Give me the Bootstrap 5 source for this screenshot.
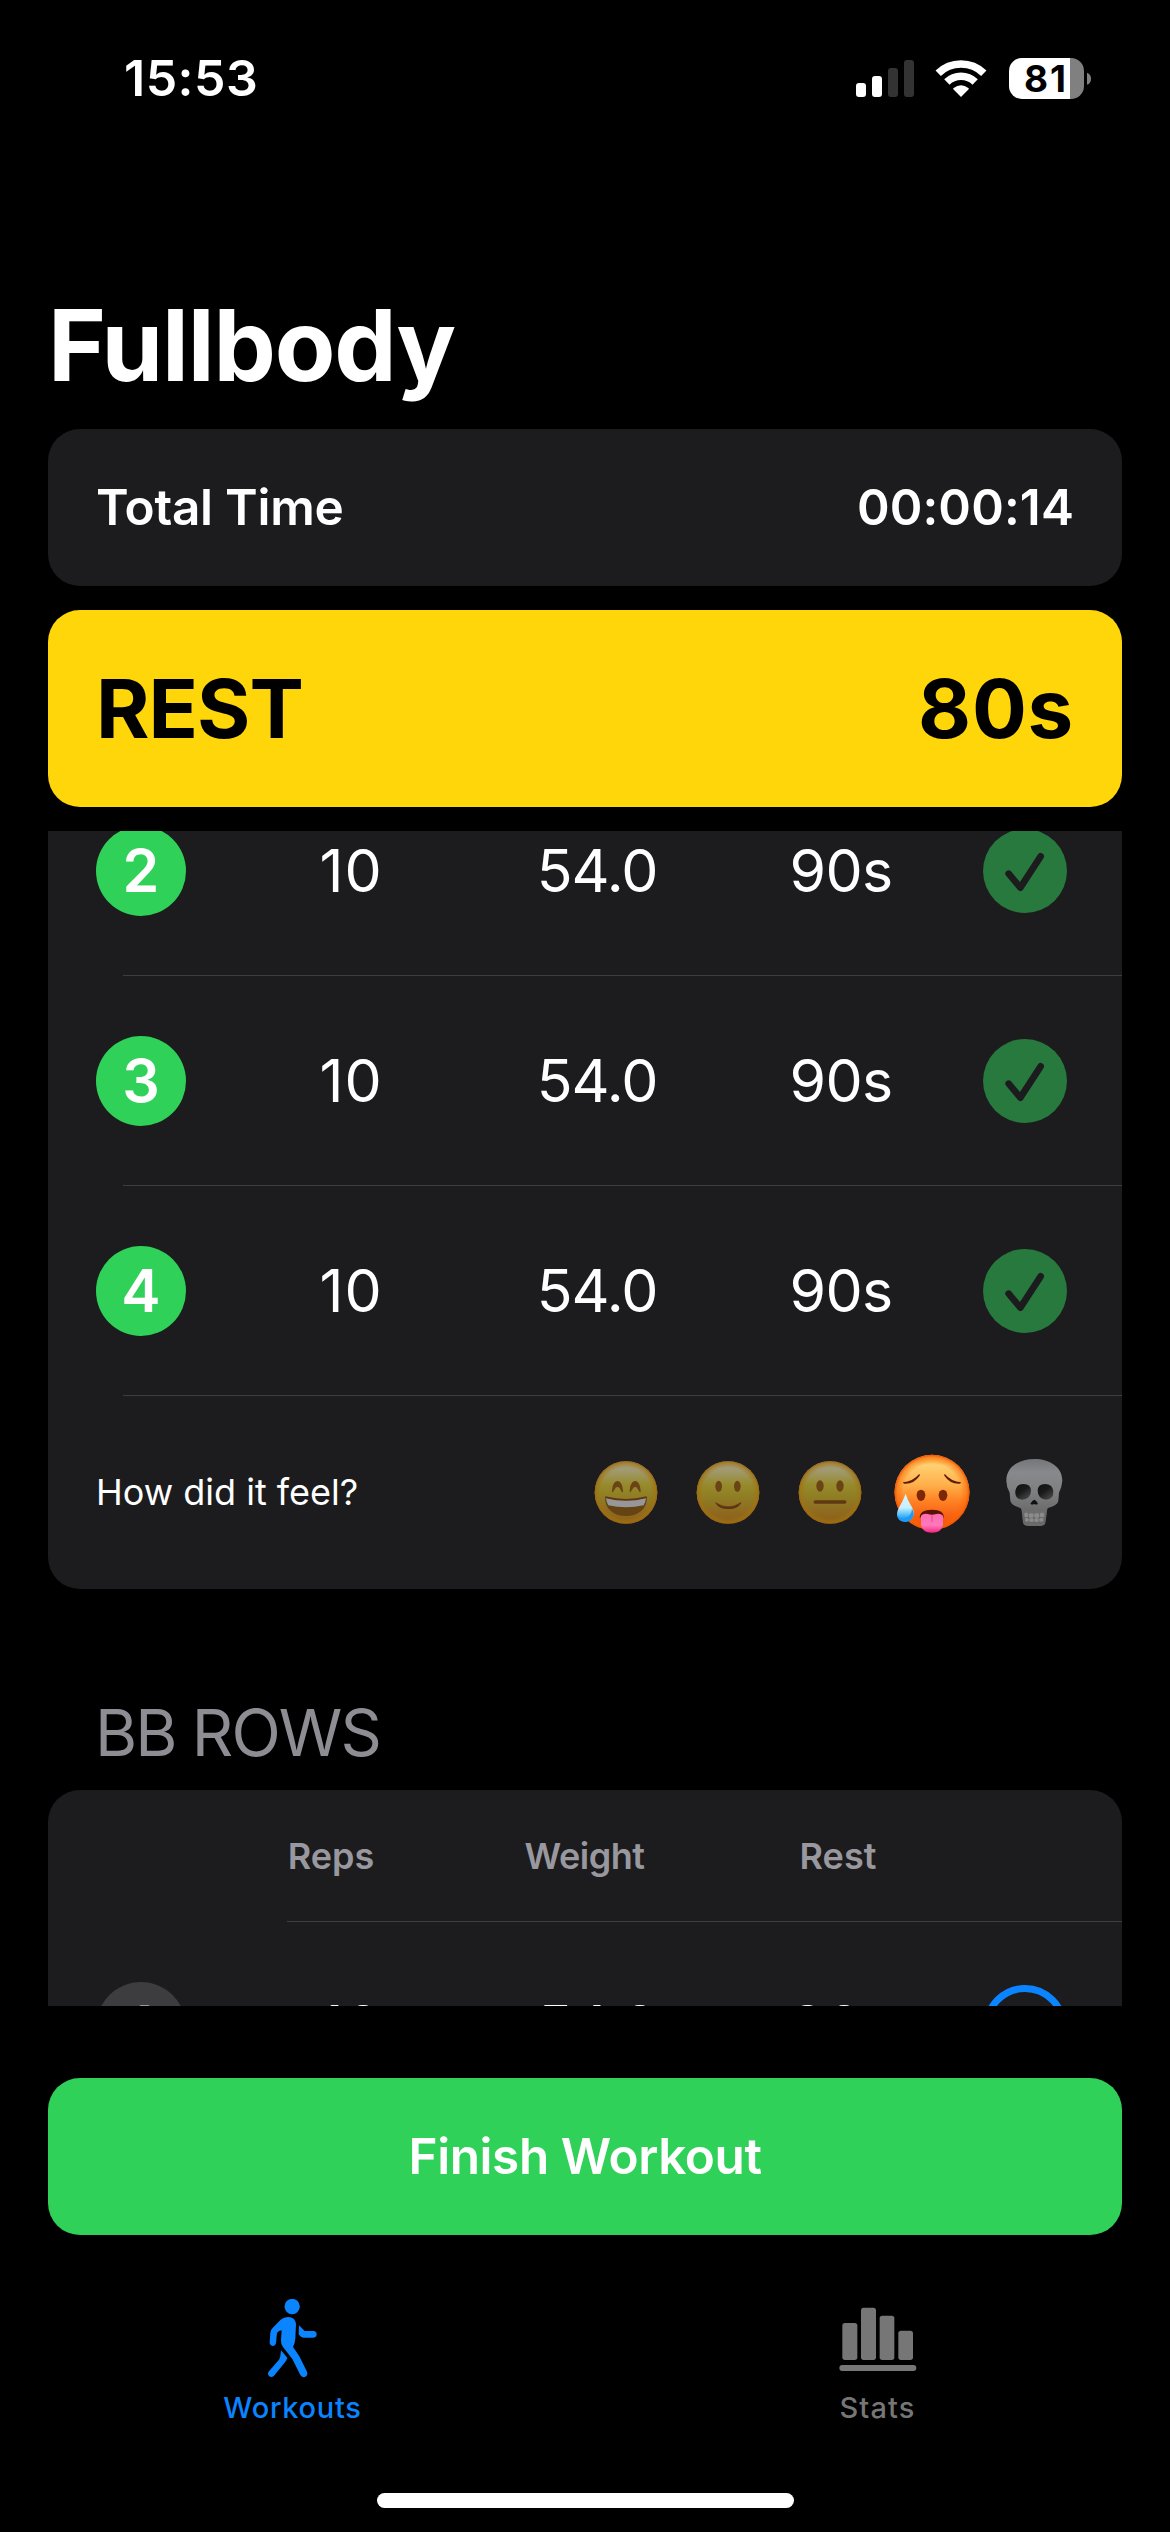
<!DOCTYPE html>
<html lang="en" data-bs-theme="dark">
<head>
<meta charset="utf-8">
<meta name="viewport" content="width=device-width, initial-scale=1">
<title>Fullbody</title>
<link href="https://cdn.jsdelivr.net/npm/bootstrap@5.3.0/dist/css/bootstrap.min.css" rel="stylesheet">
<style>
  body { width: 1170px; height: 2532px; background: #000; color: #fff; font-family: Inter, "Liberation Sans", sans-serif; overflow: hidden; line-height: 1.2; }
  svg { display: block; flex: none; }
  .status { height: 156px; padding: 0 78px 0 124px; }
  .clock { font-size: 50px; font-weight: 600; letter-spacing: .5px; }
  .wifi { margin: 0 22px 0 21px; }
  .battery { width: 75px; height: 41px; border-radius: 13px; background: linear-gradient(90deg, #fff 61px, #808080 61px); color: #000; font-size: 37px; font-weight: 700; letter-spacing: 2px; line-height: 41px; padding-left: 15px; }
  .screen { padding: 0 48px; }
  .title { margin: 129px 0 24px; font-size: 99px; font-weight: 700; letter-spacing: -1.15px; line-height: 120px; }
  .panel { background: #1c1c1e; border: 0; border-radius: 32px; }
  .bar { padding: 0 48px; margin-bottom: 24px; }
  .total { height: 157px; font-size: 49.5px; font-weight: 600; letter-spacing: -.25px; }
  .total .elapsed { letter-spacing: .13px; }
  .rest { height: 197px; background: #ffd60a; color: #000; font-size: 81.5px; font-weight: 700; letter-spacing: -.96px; }
  .rest .left { letter-spacing: .75px; }
  .scroller { height: 1175px; margin-bottom: 72px; overflow: hidden; }
  .sets { margin-top: -65px; border-radius: 0 0 32px 32px; }
  .set { height: 210px; padding-left: 48px; font-size: 59px; }
  .num { width: 90px; height: 90px; margin-right: 42px; background: #30d158; font-weight: 600; }
  .num.idle { background: #3d3d3f; color: #98989d; }
  .reps { width: 246px; letter-spacing: 1px; }
  .weight { width: 246px; letter-spacing: -1px; }
  .pause { width: 242px; letter-spacing: -.6px; margin-right: 21px; }
  .divider { height: 1px; margin: -1px 0 0 75px; border: 0; background: #3d3d41; opacity: 1; }
  .divider.wide { margin-left: 239px; }
  .feel { height: 193px; padding: 0 37px 0 48px; font-size: 36px; }
  .group-name { margin: 104px 0 17px 47px; font-size: 64.5px; font-weight: 400; letter-spacing: -1.9px; line-height: 80px; color: #8d8d93; }
  .heads { height: 132px; padding: 2px 0 0 160px; font-size: 36px; font-weight: 600; color: #98989e; }
  .heads .h-reps { width: 246px; }
  .heads .h-weight { width: 261px; letter-spacing: -.5px; }
  .heads .h-rest { width: 246px; }
  .finish { height: 157px; border: 0; border-radius: 32px; background: #30d158; color: #fff; font-size: 49.5px; font-weight: 600; letter-spacing: -.41px; }
  .tabs { padding-top: 64px; height: 258px; }
  .tabs .nav-link { padding: 0; color: #767676; font-size: 29px; font-weight: 500; letter-spacing: 1.15px; line-height: 35px; gap: 11px; }
  .tabs .nav-link.active { color: #0a84ff; letter-spacing: .72px; }
  .home-bar { width: 417px; height: 15px; border-radius: 8px; background: #fff; }
</style>
</head>
<body class="d-flex flex-column">

<svg width="0" height="0" class="position-absolute">
  <defs>
    <linearGradient id="dimFace" x1="0" y1="0" x2="0" y2="1">
      <stop offset="0" stop-color="#a39a70"/><stop offset=".14" stop-color="#a19a72"/><stop offset=".38" stop-color="#968a2b"/><stop offset=".55" stop-color="#907f25"/><stop offset=".8" stop-color="#8e6b20"/><stop offset="1" stop-color="#8c5d18"/>
    </linearGradient>
    <radialGradient id="dimRim"><stop offset=".8" stop-color="#a0700f" stop-opacity="0"/><stop offset=".94" stop-color="#a2720f" stop-opacity=".6"/><stop offset="1" stop-color="#9a6510"/></radialGradient>
    <linearGradient id="hotFace" x1="0" y1="0" x2="0" y2="1">
      <stop offset="0" stop-color="#ffb03c"/><stop offset=".14" stop-color="#ffcf70"/><stop offset=".4" stop-color="#ffb04a"/><stop offset=".62" stop-color="#ff8124"/><stop offset="1" stop-color="#f24203"/>
    </linearGradient>
    <radialGradient id="hotRim"><stop offset=".76" stop-color="#f86a08" stop-opacity="0"/><stop offset=".93" stop-color="#f96a08" stop-opacity=".6"/><stop offset="1" stop-color="#ef5003"/></radialGradient>
    <linearGradient id="sweat" x1="0" y1="0" x2="0" y2="1"><stop offset="0" stop-color="#d9f6ff"/><stop offset=".5" stop-color="#c5f0fd"/><stop offset=".85" stop-color="#27a8f7"/><stop offset="1" stop-color="#1c8df0"/></linearGradient>
    <linearGradient id="tongue" x1="0" y1="0" x2="0" y2="1"><stop offset="0" stop-color="#ff6cae"/><stop offset=".6" stop-color="#ff78bd"/><stop offset="1" stop-color="#f5277c"/></linearGradient>
    <linearGradient id="bone" x1="0" y1="0" x2="0" y2="1"><stop offset="0" stop-color="#747678"/><stop offset=".2" stop-color="#88898c"/><stop offset=".5" stop-color="#7e7f80"/><stop offset=".75" stop-color="#6d6d6e"/><stop offset="1" stop-color="#6a6a6b"/></linearGradient>
    <linearGradient id="socket" x1="0" y1="0" x2=".7" y2="1"><stop offset="0" stop-color="#111"/><stop offset=".5" stop-color="#1a1a1b"/><stop offset="1" stop-color="#464647"/></linearGradient>
    <symbol id="base" viewBox="0 0 306 375"><circle cx="153" cy="187.5" r="94" fill="url(#dimFace)"/><circle cx="153" cy="187.5" r="94" fill="url(#dimRim)"/></symbol>
    <symbol id="done" viewBox="0 0 252 252">
      <circle cx="126" cy="126" r="126" fill="#27793d"/>
      <path d="M77 134L112 176L173 82" fill="none" stroke="#1c1c1e" stroke-width="20" stroke-linecap="round" stroke-linejoin="round"/>
    </symbol>
  </defs>
</svg>

<header class="status d-flex align-items-center justify-content-between">
  <span class="clock">15:53</span>
  <div class="d-flex align-items-center">
    <svg width="58" height="41" viewBox="78 51 174 123">
      <g fill="#fff"><rect x="78" y="126" width="30" height="42" rx="9"/><rect x="126" y="105" width="30" height="63" rx="9"/></g>
      <g fill="#333"><rect x="174" y="81" width="30" height="87" rx="9"/><rect x="222" y="57" width="30" height="111" rx="9"/></g>
    </svg>
    <svg class="wifi" width="52" height="41" viewBox="316 51 156 123">
      <g fill="none" stroke="#fff" stroke-width="23">
        <path d="M325.600 96.500A98.500 98.500 0 0 1 462.400 96.500"/>
        <path d="M351.600 123A61 61 0 0 1 436.400 123"/>
      </g>
      <path d="M394 168L371 145Q369 143 372 141Q394 125 416 141Q419 143 417 145Z" fill="#fff"/>
    </svg>
    <div class="battery">81</div>
    <svg width="8" height="41" viewBox="762 51 24 123"><path d="M771 95Q783 99 783 113Q783 127 771 131Z" fill="#808080"/></svg>
  </div>
</header>

<main class="screen d-flex flex-column">
  <h1 class="title">Fullbody</h1>

  <div class="panel bar total d-flex align-items-center justify-content-between"><span>Total Time</span><span class="elapsed">00:00:14</span></div>
  <div class="panel bar rest d-flex align-items-center justify-content-between"><span>REST</span><span class="left">80s</span></div>

  <div class="scroller">
    <section class="panel sets">
      <div class="set d-flex align-items-center text-center">
        <span class="num rounded-circle d-flex align-items-center justify-content-center">2</span>
        <span class="reps">10</span><span class="weight">54.0</span><span class="pause">90s</span>
        <svg width="84" height="84"><use href="#done"/></svg>
      </div>
      <hr class="divider">
      <div class="set d-flex align-items-center text-center">
        <span class="num rounded-circle d-flex align-items-center justify-content-center">3</span>
        <span class="reps">10</span><span class="weight">54.0</span><span class="pause">90s</span>
        <svg width="84" height="84"><use href="#done"/></svg>
      </div>
      <hr class="divider">
      <div class="set d-flex align-items-center text-center">
        <span class="num rounded-circle d-flex align-items-center justify-content-center">4</span>
        <span class="reps">10</span><span class="weight">54.0</span><span class="pause">90s</span>
        <svg width="84" height="84"><use href="#done"/></svg>
      </div>
      <hr class="divider">
      <div class="feel d-flex align-items-center justify-content-between">
        <span>How did it feel?</span>
        <div class="d-flex">
          <svg width="102" height="125" viewBox="0 0 306 375">
            <use href="#base"/>
            <path id="arch" d="M111 186C111 142 144 142 144 186C138 190 137 171 127.500 171C118 171 117 190 111 186Z" fill="#6a4415"/>
            <use href="#arch" x="53"/>
            <path d="M90 201Q153 217 216 201C216 236 192 258 153 258C114 258 90 236 90 201Z" fill="#664313"/>
            <path d="M93 205Q153 220 213 205Q212 216 206 226Q153 238 100 226Q94 216 93 205Z" fill="#96969b"/>
            <path d="M91 201Q153 217 215 201" fill="none" stroke="#623612" stroke-width="4"/>
          </svg>
          <svg width="102" height="125" viewBox="0 0 306 375">
            <use href="#base"/>
            <g fill="#6a4415"><ellipse cx="125" cy="169" rx="10" ry="16.500"/><ellipse cx="181" cy="169" rx="10" ry="16.500"/></g>
            <path d="M116 218Q153 243 192 218Q184 236 154 236Q124 236 116 218Z" fill="#5c3212" stroke="#5c3212" stroke-width="2" stroke-linejoin="round"/>
          </svg>
          <svg width="102" height="125" viewBox="0 0 306 375">
            <use href="#base"/>
            <g fill="#6a4415"><ellipse cx="123" cy="168" rx="11" ry="17"/><ellipse cx="183" cy="168" rx="11" ry="17"/></g>
            <path d="M109 216H197" stroke="#5f3913" stroke-width="11" stroke-linecap="round"/>
          </svg>
          <svg width="102" height="125" viewBox="0 0 306 375">
            <circle cx="153" cy="187" r="112.500" fill="url(#hotFace)"/><circle cx="153" cy="187" r="112.500" fill="url(#hotRim)"/>
            <g fill="#5f1d04"><path d="M66 157Q95 155 114 133Q118 132 116 137Q98 163 70 161Q65 160 66 157Z"/><path d="M240 157Q211 155 192 133Q188 132 190 137Q208 163 236 161Q241 160 240 157Z"/></g>
            <g fill="#7c2806"><ellipse cx="120" cy="196" rx="13" ry="17"/><ellipse cx="186" cy="196" rx="13" ry="17"/></g>
            <path d="M116 263Q116 239 153 239Q190 239 188 263Q182 258 153 257Q124 258 116 263Z" fill="#5a1203"/>
            <path d="M120 257Q128 249 140 252Q153 257 166 252Q178 249 186 257V284Q182 308 153 308Q124 308 120 284Z" fill="url(#tongue)"/>
            <path d="M153 257V275" stroke="#e2458d" stroke-width="3" stroke-linecap="round"/>
            <path d="M74 191Q79 210 93 232C107 256 92 277 72 276C50 275 42 256 53 235Q67 210 74 191Z" fill="url(#sweat)"/>
            <path d="M93 236C104 256 92 275 72 275C60 274 52 268 49 257Q62 270 78 262Q92 254 93 236Z" fill="#1f9af4"/>
          </svg>
          <svg width="102" height="125" viewBox="0 0 306 375">
            <path d="M154 87C200 87 238 111 238 152Q237 170 228 188Q227 202 226 212C224 226 208 228 194 235Q192 238 191 252L187 278Q185 288 172 288H136Q123 288 120 278L117 252Q116 238 113 235C100 228 85 226 82 212Q81 202 80 188Q70 170 70 152C70 111 108 87 154 87Z" fill="url(#bone)"/>
            <path d="M97 183Q100 162 122 162Q144 163 144 182Q144 205 119 209Q95 208 97 183Z" fill="url(#socket)"/>
            <path d="M211 183Q208 162 186 162Q164 163 164 182Q164 205 189 209Q213 208 211 183Z" fill="url(#socket)"/>
            <path d="M154 209Q160 211 165 221Q161 226 154 222Q147 226 142 221Q148 211 154 209Z" fill="#111"/>
            <path d="M118 250H190L186 278H123Z" fill="#666667"/>
            <g fill="#8b8b8c"><rect x="124" y="248" width="11" height="14" rx="4"/><rect x="137" y="250" width="15" height="13" rx="4"/><rect x="154" y="250" width="15" height="13" rx="4"/><rect x="171" y="248" width="13" height="14" rx="4"/><rect x="126" y="264" width="11" height="11" rx="4"/><rect x="139" y="265" width="13" height="11" rx="4"/><rect x="154" y="265" width="13" height="11" rx="4"/><rect x="169" y="264" width="12" height="11" rx="4"/></g>
          </svg>
        </div>
      </div>
    </section>

    <h2 class="group-name">BB ROWS</h2>
    <section class="panel">
      <div class="heads d-flex align-items-center text-center">
        <span class="h-reps">Reps</span><span class="h-weight">Weight</span><span class="h-rest">Rest</span>
      </div>
      <hr class="divider wide">
      <div class="set d-flex align-items-center text-center">
        <span class="num idle rounded-circle d-flex align-items-center justify-content-center">1</span>
        <span class="reps">10</span><span class="weight">54.0</span><span class="pause">90s</span>
        <svg width="84" height="84"><circle cx="42" cy="42" r="38.500" fill="none" stroke="#0a84ff" stroke-width="7"/></svg>
      </div>
    </section>
  </div>

  <button class="btn finish w-100 p-0">Finish Workout</button>
</main>

<nav class="tabs nav nav-fill">
  <a class="nav-link active nav-item d-flex flex-column align-items-center w-50" href="#">
    <svg width="80" height="80" viewBox="157 87 240 240" fill="currentColor">
      <circle cx="274.500" cy="109.500" r="23"/>
      <path d="M262 141C277 141 286 150 286 164L284 205Q283 222 277 231L293 254Q297 260 300 267L319 305Q323 317 312 321Q303 323 299 315L275 267L247 231Q240 222 241 210L243 181Q234 182 229 189L226 219Q224 228 216 228Q207 227 207 217L209 188Q210 180 215 175L240 149Q249 141 262 141Z"/>
      <path d="M295 166L312 183H338Q348 184 348 193Q348 203 338 203H309Q303 203 299 199L294 193Z"/>
      <path d="M241 241L260 263Q258 271 253 277L220 317Q212 324 205 318Q199 311 205 304L235 269Q238 265 239 258Z"/>
    </svg>
    <span>Workouts</span>
  </a>
  <a class="nav-link nav-item d-flex flex-column align-items-center w-50" href="#">
    <svg width="80" height="80" viewBox="110 87 240 240" fill="currentColor">
      <rect x="123" y="159" width="45" height="111" rx="8"/><rect x="179" y="113" width="45" height="157" rx="8"/><rect x="235" y="137" width="44" height="133" rx="8"/><rect x="291" y="182" width="44" height="88" rx="8"/><rect x="114" y="285" width="231" height="18" rx="9"/>
    </svg>
    <span>Stats</span>
  </a>
</nav>
<div class="home-bar mx-auto"></div>

<script src="https://cdn.jsdelivr.net/npm/bootstrap@5.3.0/dist/js/bootstrap.bundle.min.js"></script>
</body>
</html>
